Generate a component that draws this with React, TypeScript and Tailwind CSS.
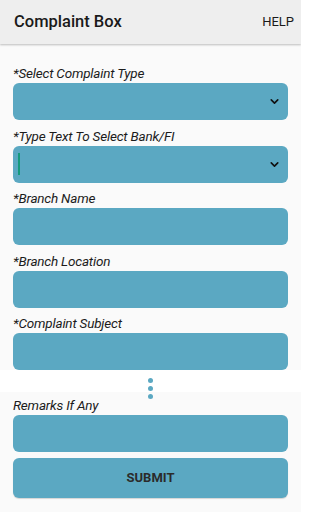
import { ChevronDown } from "lucide-react";

type FieldProps = {
  label: string;
  select?: boolean;
  cursor?: boolean;
};

function Field({ label, select, cursor }: FieldProps) {
  return (
    <div className="flex flex-col">
      <label className="h-[18px] text-[13.5px] italic leading-[18px] tracking-[-0.2px] text-[#1c1c1c]">
        {label}
      </label>
      <div className="mt-[1px] flex h-[37px] items-center rounded-[6px] bg-[#5ba8c2] px-[5px]">
        {cursor && <span className="h-[22px] w-[1.5px] bg-[#149a7c]" />}
        {select && (
          <ChevronDown
            className="ml-auto mr-[2px] h-[13px] w-[13px] text-[#111]"
            strokeWidth={3}
          />
        )}
      </div>
    </div>
  );
}

export default function App() {
  return (
    <div
      className="flex h-[512px] w-[301px] flex-col overflow-hidden bg-[#fafafa]"
      style={{ fontFamily: "Roboto, 'Liberation Sans', sans-serif" }}
    >
      {/* Header */}
      <header className="flex h-[44px] shrink-0 items-center justify-between bg-[#eeeeee] pl-[14px] pr-[7px] shadow-[0_1px_2px_rgba(0,0,0,0.25)]">
        <h1 className="text-[16.5px] font-medium text-[#1a1a1a]">Complaint Box</h1>
        <span className="text-[13px] text-[#1a1a1a]">HELP</span>
      </header>

      {/* Form */}
      <div className="flex flex-col gap-[6.5px] px-[13px] pt-[20px]">
        <Field label="*Select Complaint Type" select />
        <Field label="*Type Text To Select Bank/FI" select cursor />
        <Field label="*Branch Name" />
        <Field label="*Branch Location" />
        <Field label="*Complaint Subject" />
      </div>

      {/* Scroll dots */}
      <div className="flex h-[22px] shrink-0 flex-col items-center gap-[3px] bg-white pt-[8px]">
        <span className="h-[5px] w-[5px] shrink-0 rounded-full bg-[#5ba8c2]" />
        <span className="h-[5px] w-[5px] shrink-0 rounded-full bg-[#5ba8c2]" />
        <span className="h-[5px] w-[5px] shrink-0 rounded-full bg-[#5ba8c2]" />
      </div>

      <div className="mt-[4px] flex flex-col px-[13px]">
        <Field label="Remarks If Any" />
        <button className="mt-[6px] h-[40px] rounded-[6px] bg-[#5ba8c2] text-[13px] font-bold text-[#2b2b2b] shadow-[0_1px_1px_rgba(0,0,0,0.15)]">
          SUBMIT
        </button>
      </div>
    </div>
  );
}
